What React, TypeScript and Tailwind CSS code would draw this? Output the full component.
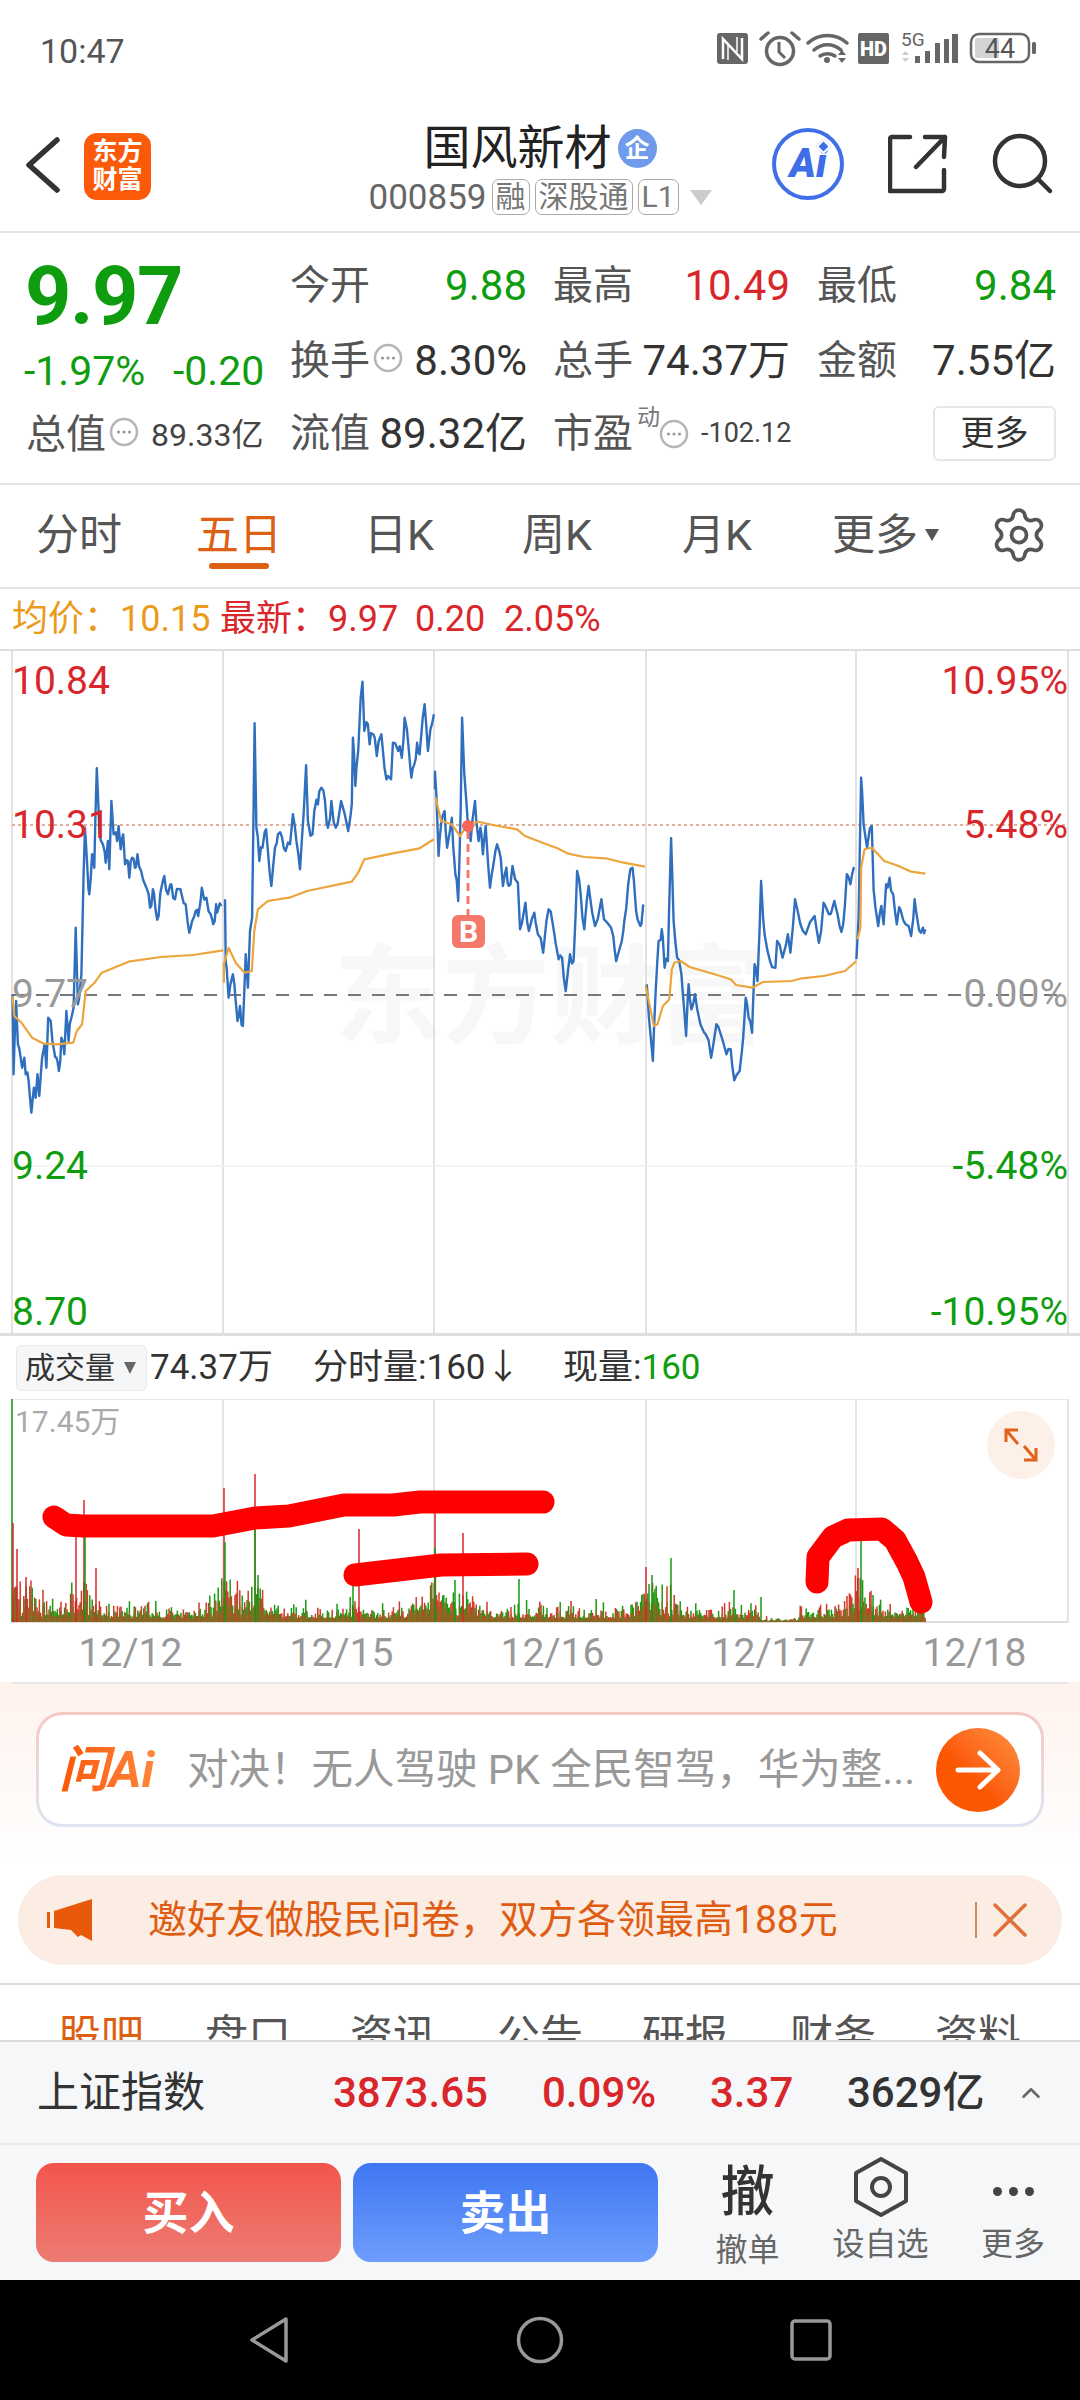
import { Settings, ChevronUp } from "lucide-react";

type Pt = [number, number];

// price series per trading day, stored in chart units (x * 2.8, y * 3 from the chart origin)
const priceA: Pt[][] = [
  [[35,1060],[38,1300],[45,1080],[50,1210],[58,1250],[62,1280],[68,1250],[72,1300],[80,1320],[88,1415],[95,1340],[100,1370],[105,1300],[110,1365],[118,1250],[125,1210],[130,1280],[135,1130],[142,1140],[150,1220],[158,1250],[165,1290],[172,1190],[180,1240],[186,1110],[192,1200],[200,1130],[206,1100],[212,860],[218,1090],[228,1000],[234,700],[238,560],[243,650],[250,760],[258,640],[264,680],[271,382],[278,560],[288,610],[296,665],[302,600],[306,685],[312,480],[318,580],[328,600],[332,555],[338,625],[345,580],[350,670],[358,660],[362,710],[370,650],[378,680],[385,640],[395,690],[410,740],[420,800],[428,745],[436,810],[444,825],[452,740],[460,705],[470,760],[480,730],[490,775],[505,745],[520,790],[530,875],[538,840],[548,810],[555,825],[565,740],[578,770],[590,820],[597,850],[605,790],[612,800],[620,795]],
  [[630,775],[632,960],[640,1070],[652,1000],[660,1080],[665,1140],[672,1095],[680,1155],[688,940],[694,1040],[700,870],[706,830],[713,247],[718,560],[726,660],[735,620],[745,565],[750,630],[760,735],[770,620],[778,580],[790,590],[800,630],[812,610],[820,520],[830,600],[840,685],[850,520],[857,373],[862,540],[875,580],[880,510],[890,490],[900,440],[910,480],[918,560],[928,480],[940,560],[955,480],[975,570],[985,490],[988,290],[995,435],[1003,330],[1010,170],[1015,122],[1020,270],[1030,250],[1035,310],[1045,280],[1055,345],[1068,280],[1082,415],[1095,415],[1100,305],[1115,330],[1125,350],[1133,230],[1145,330],[1152,410],[1160,370],[1168,305],[1175,340],[1189,190],[1198,330],[1205,265],[1215,220]],
  [[1218,445],[1218,392],[1228,645],[1235,550],[1245,510],[1252,620],[1265,530],[1275,700],[1283,780],[1290,500],[1294,230],[1300,400],[1310,550],[1318,600],[1330,480],[1340,600],[1345,560],[1352,640],[1360,555],[1372,740],[1380,680],[1392,610],[1402,650],[1408,735],[1418,680],[1425,735],[1435,675],[1450,725],[1456,865],[1471,785],[1481,870],[1496,815],[1506,880],[1521,935],[1536,805],[1551,870],[1564,955],[1574,950],[1584,1050],[1596,940],[1606,960],[1616,690],[1626,760],[1636,865],[1648,735],[1666,855],[1684,775],[1696,840],[1711,860],[1721,925],[1728,950],[1741,900],[1748,840],[1759,730],[1771,680],[1781,810],[1793,855],[1801,790]],
  [[1811,1030],[1828,1260],[1836,1050],[1844,900],[1853,865],[1861,980],[1870,960],[1879,592],[1886,840],[1896,950],[1908,1000],[1916,1110],[1921,1185],[1928,1030],[1936,1105],[1946,1060],[1961,1150],[1976,1180],[1991,1250],[2006,1150],[2021,1190],[2034,1240],[2046,1225],[2056,1318],[2071,1290],[2081,1190],[2088,1070],[2096,1130],[2106,1175],[2113,970],[2121,1020],[2131,720],[2141,880],[2156,960],[2171,980],[2176,900],[2191,950],[2206,880],[2213,935],[2226,775],[2241,850],[2256,880],[2281,825],[2293,905],[2306,785],[2321,820],[2336,780],[2351,855],[2361,850],[2371,700],[2381,730],[2391,678]],
  [[2398,955],[2404,830],[2411,410],[2418,550],[2428,620],[2441,555],[2446,745],[2459,855],[2468,795],[2474,850],[2481,730],[2491,710],[2501,760],[2511,850],[2521,805],[2536,850],[2551,885],[2561,775],[2568,830],[2578,875],[2584,860],[2591,865]],
];

const averageA: Pt[][] = [
  [[35,1065],[40,1125],[60,1145],[90,1190],[120,1207],[160,1210],[205,1205],[215,1170],[230,1150],[240,1050],[265,1025],[285,995],[360,962],[450,948],[540,942],[625,928]],
  [[627,1025],[627,970],[640,920],[660,965],[685,995],[705,990],[712,870],[722,805],[750,780],[810,770],[860,750],[985,722],[1003,695],[1020,655],[1100,637],[1175,622],[1215,595]],
  [[1220,470],[1235,540],[1265,550],[1288,585],[1310,550],[1340,542],[1380,552],[1448,565],[1470,585],[1530,610],[1561,622],[1591,638],[1636,648],[1696,652],[1746,665],[1806,677]],
  [[1808,1035],[1831,1155],[1841,1150],[1856,1095],[1874,1075],[1881,985],[1888,965],[1906,960],[1931,978],[1996,998],[2046,1015],[2061,1032],[2106,1040],[2136,1023],[2216,1020],[2246,1012],[2306,1005],[2366,990],[2398,960]],
  [[2401,895],[2409,860],[2411,680],[2421,625],[2441,620],[2476,660],[2516,675],[2551,692],[2591,698]],
];

const toPoints = (pts: Pt[]) =>
  pts.map(([x, y]) => `${(x / 2.8).toFixed(1)},${(640 + y / 3).toFixed(1)}`).join(" ");

const makeRandom = (start: number) => {
  let seed = start;
  return () => {
    seed = (seed * 16807) % 2147483647;
    return seed / 2147483647;
  };
};

// minute-level wiggle between the sampled prices
const roughen = (pts: Pt[], start: number): Pt[] => {
  const rnd = makeRandom(start);
  const out: Pt[] = [];
  pts.forEach(([x, y], i) => {
    out.push([x, y]);
    const next = pts[i + 1];
    if (next && next[0] - x >= 7) {
      const t = 0.35 + rnd() * 0.3;
      out.push([x + (next[0] - x) * t, y + (next[1] - y) * t + (rnd() - 0.5) * 46]);
    }
  });
  return out;
};

// turnover bars: a noisy floor plus bursts around the open and close of each session
const bursts: [number, number, number][] = [
  [20, 18, 38], [80, 10, 38], [228, 12, 36], [255, 8, 36], [355, 7, 24], [432, 10, 40],
  [460, 12, 22], [648, 7, 34], [668, 7, 36], [860, 10, 42],
];
const buildBars = () => {
  const rnd = makeRandom(4711);
  const out: { x: number; h: number; red: boolean }[] = [];
  for (let x = 13; x <= 926; x += 1.2) {
    const quiet = x > 760 && x < 800 ? 0.3 : 1;
    let h = (4 + rnd() * rnd() * 20) * quiet;
    for (const [c, s, a] of bursts) {
      h += a * Math.exp(-((x - c) ** 2) / (2 * s * s)) * rnd();
    }
    out.push({ x, h, red: rnd() > 0.5 });
  }
  return out;
};
const bars = buildBars();

const spikes: [number, number, string][] = [
  [12, 1399, "#0f9d0f"], [13, 1523, "#d9262b"], [17, 1549, "#d9262b"], [26, 1577, "#d9262b"],
  [76, 1537, "#d9262b"], [84, 1500, "#d9262b"], [85, 1537, "#0f9d0f"], [96, 1568, "#d9262b"],
  [224, 1488, "#d9262b"], [225, 1542, "#0f9d0f"], [255, 1474, "#d9262b"], [255, 1528, "#0f9d0f"],
  [258, 1575, "#0f9d0f"], [359, 1529, "#d9262b"], [353, 1583, "#0f9d0f"], [435, 1512, "#d9262b"],
  [435, 1548, "#0f9d0f"], [463, 1533, "#d9262b"], [455, 1580, "#0f9d0f"], [519, 1579, "#0f9d0f"],
  [646, 1567, "#d9262b"], [652, 1575, "#0f9d0f"], [671, 1558, "#0f9d0f"], [734, 1590, "#0f9d0f"],
  [761, 1597, "#0f9d0f"], [858, 1568, "#d9262b"], [861, 1538, "#0f9d0f"], [873, 1595, "#0f9d0f"],
];

const gridX = [12, 223, 434, 646, 856, 1068];

function MoreDot({ className = "" }: { className?: string }) {
  return (
    <svg width="30" height="30" viewBox="0 0 30 30" className={`shrink-0 ${className}`}>
      <circle cx="15" cy="15" r="13" fill="none" stroke="#b5b5b5" strokeWidth="2.5" />
      <circle cx="9.5" cy="15" r="1.6" fill="#999" />
      <circle cx="15" cy="15" r="1.6" fill="#999" />
      <circle cx="20.5" cy="15" r="1.6" fill="#999" />
    </svg>
  );
}

function StatusIcons() {
  return (
    <svg width="325" height="44" viewBox="715 30 325 44" className="block">
      {/* nfc */}
      <rect x="717" y="34" width="31" height="31" rx="3" fill="#666" />
      <path d="M723 60V40l19 20V39" fill="none" stroke="#fff" strokeWidth="2.5" />
      <path d="M728 61V46M737 38v15" fill="none" stroke="#fff" strokeWidth="1.5" />
      {/* alarm */}
      <circle cx="780" cy="52" r="13.5" fill="none" stroke="#666" strokeWidth="3.5" />
      <path d="M779 43v10l6 6" fill="none" stroke="#666" strokeWidth="3" />
      <path d="M761 40l7-6M799 40l-7-6" fill="none" stroke="#666" strokeWidth="3.5" strokeLinecap="round" />
      {/* wifi */}
      <path d="M808 44c11-10 28-10 39 0M814 51c8-7 19-7 27 0M820 57c4-3 11-3 15 0" fill="none" stroke="#666" strokeWidth="3.5" strokeLinecap="round" />
      <circle cx="827" cy="61" r="3" fill="#666" />
      <path d="M838 56l4-5 4 5zM838 59l4 5 4-5z" fill="#666" />
      {/* hd */}
      <rect x="858" y="34" width="31" height="31" rx="2" fill="#666" />
      <text x="873.5" y="57" textAnchor="middle" fontSize="20" fontWeight="900" fill="#fff">HD</text>
      {/* mobile data */}
      <text x="901" y="47" fontSize="19" fill="#666">5G</text>
      <path d="M902 56l3.500-4 3.500 4zM902 59l3.500 4 3.500-4z" fill="#ccc" />
      <rect x="915" y="57" width="5" height="7" fill="#666" />
      <rect x="925" y="52" width="5" height="12" fill="#666" />
      <rect x="935" y="44" width="5" height="20" fill="#666" />
      <rect x="952" y="35" width="6" height="29" fill="#666" />
      <rect x="944" y="40" width="5" height="24" fill="#666" />
      {/* battery */}
      <rect x="971" y="35" width="58" height="28" rx="8" fill="none" stroke="#666" strokeWidth="2.5" />
      <path d="M977 39h22v20h-22a2 2 0 0 1-2-2V41a2 2 0 0 1 2-2z" fill="#d4d4d4" />
      <rect x="1032" y="43" width="4" height="12" rx="1.500" fill="#666" />
      <text x="1000" y="59" textAnchor="middle" fontSize="27" fill="#555">44</text>
    </svg>
  );
}

function Tag({ children }: { children: React.ReactNode }) {
  return (
    <span className="flex h-[36px] items-center rounded-[7px] border-[1.5px] border-[#aaa] px-[3px] text-[30px] leading-none text-[#777]">
      {children}
    </span>
  );
}

function Header() {
  return (
    <div className="flex h-[133px] border-b-2 border-[#e4e4e4]">
      <div className="flex w-[320px] items-center pl-[26px]">
        <svg width="34" height="56" viewBox="0 0 34 56" className="mb-[2px]">
          <path d="M31 3 3 28l28 25" fill="none" stroke="#333" strokeWidth="5.500" strokeLinecap="round" strokeLinejoin="round" />
        </svg>
        <div className="mt-[1px] ml-[24px] flex h-[67px] w-[67px] flex-col items-center justify-center rounded-[13px] bg-[#fa5a0a] text-[25px] leading-[28px] font-bold text-white">
          <span>东方</span>
          <span>财富</span>
        </div>
      </div>
      <div className="flex w-[440px] flex-col items-center pt-[22px]">
        <div className="flex items-center">
          <span className="text-[47px] leading-[52px] text-[#222]">国风新材</span>
          <span className="ml-[6px] flex h-[39px] w-[39px] items-center justify-center rounded-full bg-[#6f9bea] text-[25px] leading-none font-bold text-white">
            企
          </span>
        </div>
        <div className="mt-[5px] flex items-center gap-[5px]">
          <span className="text-[35px] leading-none text-[#666]">000859</span>
          <Tag>融</Tag>
          <Tag>深股通</Tag>
          <Tag>L1</Tag>
          <svg width="22" height="15" viewBox="0 0 22 15" className="ml-[6px]">
            <path d="M0 0h22L11 15z" fill="#ccc" />
          </svg>
        </div>
      </div>
      <div className="flex flex-1 items-center pb-[4px] pl-[12px]">
        <div className="relative flex h-[72px] w-[72px] items-center justify-center rounded-full border-[4px] border-[#3f6fe8]">
          <span className="text-[40px] leading-none font-black text-[#3f6fe8] italic">Ai</span>
          <span className="absolute top-[9px] right-[11px] h-[11px] w-[11px] rotate-45 border-2 border-white bg-[#3f6fe8]" />
        </div>
        <svg width="60" height="60" viewBox="0 0 60 60" className="ml-[44px]">
          <path d="M22 3H4a2 2 0 0 0-2 2v52h52a2 2 0 0 0 2-2V36M28 33 57 3M37 3h20l-1 20" fill="none" stroke="#333" strokeWidth="4.500" strokeLinecap="round" strokeLinejoin="round" />
        </svg>
        <svg width="62" height="62" viewBox="0 0 62 62" className="ml-[44px]">
          <circle cx="28" cy="28" r="25" fill="none" stroke="#333" strokeWidth="4.500" />
          <path d="M46 46 58 58" fill="none" stroke="#333" strokeWidth="4.500" strokeLinecap="round" />
        </svg>
      </div>
    </div>
  );
}

function Quote() {
  const label = "shrink-0 whitespace-nowrap text-[40px] leading-none text-[#555]";
  const num = "text-[42px] leading-none";
  return (
    <div className="flex h-[252px] border-b-2 border-[#e4e4e4]">
      <div className="w-[290px] shrink-0">
        <div className="h-[84px] pt-[24px] pl-[25px] text-[81px] leading-[80px] font-bold tracking-[-1.5px] text-[#0f9d0f]">
          9.97
        </div>
        <div className="mt-[34px] flex h-[40px] items-center pl-[24px] text-[#0f9d0f]">
          <span className="w-[149px] text-[41px] leading-none">-1.97%</span>
          <span className="text-[41px] leading-none">-0.20</span>
        </div>
        <div className="mt-[24px] flex h-[40px] items-center pl-[26px]">
          <span className={label}>总值</span>
          <MoreDot className="mt-[-6px] ml-[3px]" />
          <span className="ml-[12px] text-[32px] leading-none text-[#444]">89.33亿</span>
        </div>
      </div>
      <div className="flex-1 pt-[15px]">
        <div className="flex h-[76px] items-center">
          <div className="flex w-[237px] items-center justify-between">
            <span className={label}>今开</span>
            <span className={`${num} text-[#0f9d0f]`}>9.88</span>
          </div>
          <div className="ml-[26px] flex w-[237px] items-center justify-between">
            <span className={label}>最高</span>
            <span className={`${num} text-[#d9262b]`}>10.49</span>
          </div>
          <div className="ml-[27px] flex w-[239px] items-center justify-between">
            <span className={label}>最低</span>
            <span className={`${num} text-[#0f9d0f]`}>9.84</span>
          </div>
        </div>
        <div className="flex h-[73px] items-center">
          <div className="flex w-[237px] items-center justify-between">
            <span className="flex items-center">
              <span className={label}>换手</span>
              <MoreDot className="mt-[-6px] ml-[3px]" />
            </span>
            <span className={`${num} text-[#333]`}>8.30%</span>
          </div>
          <div className="ml-[26px] flex w-[237px] items-center justify-between">
            <span className={label}>总手</span>
            <span className={`${num} text-[#333]`}>74.37万</span>
          </div>
          <div className="ml-[27px] flex w-[239px] items-center justify-between">
            <span className={label}>金额</span>
            <span className={`${num} text-[#333]`}>7.55亿</span>
          </div>
        </div>
        <div className="flex h-[73px] items-center">
          <div className="flex w-[237px] items-center justify-between">
            <span className={label}>流值</span>
            <span className={`${num} text-[#333]`}>89.32亿</span>
          </div>
          <div className="relative ml-[26px] flex w-[237px] items-center">
            <span className={label}>市盈</span>
            <span className="absolute top-[-8px] left-[84px] text-[23px] leading-none text-[#777]">动</span>
            <MoreDot className="ml-[26px]" />
            <span className="ml-[12px] text-[27px] leading-none whitespace-nowrap text-[#444]">-102.12</span>
          </div>
          <div className="ml-[27px] flex w-[239px] justify-end">
            <div className="h-[55px] w-[123px] rounded-[6px] border-2 border-[#e6e6e6] text-center text-[34px] leading-[51px] text-[#333]">
              更多
            </div>
          </div>
        </div>
      </div>
    </div>
  );
}

function PeriodTabs() {
  const tab = "text-[43px] leading-none text-[#555]";
  return (
    <div className="flex h-[104px] items-center border-b-2 border-[#e4e4e4] pb-[2px] pl-[36px]">
      <div className="w-[160px]">
        <span className={tab}>分时</span>
      </div>
      <div className="relative w-[168px]">
        <span className="text-[43px] leading-none text-[#dd5f14]">五日</span>
        <span className="absolute top-[49px] left-[13px] h-[6px] w-[60px] rounded-[3px] bg-[#dd5f14]" />
      </div>
      <div className="w-[158px]">
        <span className={tab}>日K</span>
      </div>
      <div className="w-[160px]">
        <span className={tab}>周K</span>
      </div>
      <div className="w-[150px]">
        <span className={tab}>月K</span>
      </div>
      <div className="flex w-[157px] items-center">
        <span className={tab}>更多</span>
        <svg width="16" height="14" viewBox="0 0 16 14" className="ml-[6px]">
          <path d="M1 1h14L8 13z" fill="#555" />
        </svg>
      </div>
      <Settings size={60} strokeWidth={1.5} color="#555" />
    </div>
  );
}

function InfoRow() {
  return (
    <div className="flex h-[60px] items-center pl-[12px] text-[36px] leading-none text-[#d9262b]">
      <span className="text-[#eb9a1c]">均价：</span>
      <span className="w-[100px] text-[#eb9a1c]">10.15</span>
      <span>最新：</span>
      <span className="w-[87px]">9.97</span>
      <span className="w-[89px]">0.20</span>
      <span>2.05%</span>
    </div>
  );
}

function axisLabel(y: string, align: string, color: string, text: string) {
  return (
    <span className={`absolute ${y} ${align} text-[39px] leading-none ${color}`}>{text}</span>
  );
}

function PriceChart() {
  return (
    <div className="relative h-[687px] overflow-hidden border-t-2 border-b-[3px] border-[#dedede]">
      <div className="absolute top-[293px] left-[334px] text-[108px] leading-none font-bold text-[#f7f7f7]">
        东方财富
      </div>
      <svg width="1080" height="687" viewBox="0 650 1080 687" className="absolute top-0 left-0">
        {gridX.map((x) => (
          <line key={x} x1={x} x2={x} y1={650} y2={1337} stroke="#d8d8d8" strokeWidth="1.500" />
        ))}
        <line x1={12} x2={1068} y1={1165} y2={1165} stroke="#f0f0f0" strokeWidth="1.500" />
        <line x1={12} x2={1068} y1={824} y2={824} stroke="#d9967a" strokeWidth="1.500" strokeDasharray="3 3" />
        <line x1={12} x2={1068} y1={994} y2={994} stroke="#777" strokeWidth="2" strokeDasharray="13 11" />
        {priceA.map((pts, i) => (
          <polyline key={i} points={toPoints(roughen(pts, 101 + i * 37))} fill="none" stroke="#2f6fbe" strokeWidth="2.400" strokeLinejoin="round" />
        ))}
        {averageA.map((pts, i) => (
          <polyline key={i} points={toPoints(pts)} fill="none" stroke="#eca43c" strokeWidth="2.200" strokeLinejoin="round" />
        ))}
        {/* buy marker */}
        <line x1={468} x2={468} y1={830} y2={915} stroke="#f4796b" strokeWidth="3" strokeDasharray="8 5" />
        <circle cx="468" cy="825" r="6" fill="#f4655a" />
      </svg>
      <div className="absolute top-[264px] left-[452px] flex h-[33px] w-[33px] items-center justify-center rounded-[6px] bg-[#f4796b] text-[30px] leading-none font-bold text-white">
        B
      </div>
      {axisLabel("top-[11px]", "left-[12px]", "text-[#d9262b]", "10.84")}
      {axisLabel("top-[155px]", "left-[12px]", "text-[#d9262b]", "10.31")}
      {axisLabel("top-[324px]", "left-[12px]", "text-[#999]", "9.77")}
      {axisLabel("top-[496px]", "left-[12px]", "text-[#0f9d0f]", "9.24")}
      {axisLabel("top-[642px]", "left-[12px]", "text-[#0f9d0f]", "8.70")}
      {axisLabel("top-[11px]", "right-[12px]", "text-[#d9262b]", "10.95%")}
      {axisLabel("top-[155px]", "right-[12px]", "text-[#d9262b]", "5.48%")}
      {axisLabel("top-[324px]", "right-[12px]", "text-[#999]", "0.00%")}
      {axisLabel("top-[496px]", "right-[12px]", "text-[#0f9d0f]", "-5.48%")}
      {axisLabel("top-[642px]", "right-[12px]", "text-[#0f9d0f]", "-10.95%")}
    </div>
  );
}

function VolumeHeader() {
  return (
    <div className="flex h-[63px] items-center text-[35px] leading-none text-[#333]">
      <div className="ml-[16px] flex h-[46px] w-[131px] items-center rounded-[6px] border border-[#e8e8ea] bg-[#f5f6f8] pl-[8px]">
        <span className="text-[30px]">成交量</span>
        <svg width="12" height="13" viewBox="0 0 12 13" className="ml-[9px]">
          <path d="M0 1h12L6 13z" fill="#666" />
        </svg>
      </div>
      <span className="ml-[3px] w-[163px]">74.37万</span>
      <span className="w-[250px]">分时量:160↓</span>
      <span>现量:</span>
      <span className="text-[#0f9d0f]">160</span>
    </div>
  );
}

function VolumeChart() {
  return (
    <div className="relative h-[225px]">
      <svg width="1080" height="225" viewBox="0 1399 1080 225" className="block">
        <line x1={12} x2={1068} y1={1399} y2={1399} stroke="#e0e0e0" strokeWidth="1.500" />
        <line x1={12} x2={1068} y1={1622} y2={1622} stroke="#dedede" strokeWidth="2" />
        {gridX.map((x) => (
          <line key={x} x1={x} x2={x} y1={1399} y2={1622} stroke="#dcdcdc" strokeWidth="1.500" />
        ))}
        {bars.map((b) => (
          <line key={b.x} x1={b.x} x2={b.x} y1={1622} y2={1622 - b.h} stroke={b.red ? "#cf3a2a" : "#1a9a12"} strokeWidth="1.500" />
        ))}
        {/* overlapping red and green bars read as olive near the floor */}
        {bars.map((b) => (
          <line key={b.x} x1={b.x} x2={b.x} y1={1622} y2={1622 - b.h * 0.55} stroke="#8f6420" strokeWidth="1.200" />
        ))}
        {spikes.map(([x, top, color]) => (
          <line key={`${x}-${top}`} x1={x} x2={x} y1={1622} y2={top} stroke={color} strokeWidth="1.500" />
        ))}
        {/* hand-drawn marks over the bars */}
        <g fill="none" stroke="#ff0000" strokeWidth="23" strokeLinecap="round" strokeLinejoin="round">
          <polyline points="54,1517 66,1525 83,1526 213,1526 255,1518 289,1516 344,1505 393,1505 420,1502 543,1502" />
          <polyline points="355,1575 441,1565 527,1564" />
          <polyline points="817,1582 818,1557 833,1537 848,1530 882,1529 895,1540 907,1562 914,1577 921,1602" />
        </g>
      </svg>
      <span className="absolute top-[8px] left-[15px] text-[30px] leading-none text-[#aaa]">17.45万</span>
      <div className="absolute top-[12px] left-[987px] flex h-[68px] w-[68px] items-center justify-center rounded-full bg-[#fdf0e8]">
        <svg width="40" height="40" viewBox="0 0 40 40">
          <path d="M5 17V5h12M5 5l12 14M35 23v12H23M35 35 23 21" fill="none" stroke="#e0631a" strokeWidth="3" />
        </svg>
      </div>
    </div>
  );
}

function DateAxis() {
  return (
    <div className="flex h-[58px] items-center pl-[25px] text-[39px] leading-none text-[#999]">
      {["12/12", "12/15", "12/16", "12/17", "12/18"].map((d) => (
        <span key={d} className="w-[211px] text-center">
          {d}
        </span>
      ))}
    </div>
  );
}

function Promo() {
  return (
    <div className="h-[301px] bg-linear-to-b from-[#fef2ed] to-[#ffffff] to-[60%]">
      <div className="mx-[12px] h-[2px] bg-[#e6e6e6]" />
      <div className="mx-[36px] mt-[28px] h-[115px] rounded-[26px] bg-linear-to-b from-[#f6c8c2] to-[#dde4f2] p-[3px]">
        <div className="flex h-full items-center rounded-[23px] bg-white pl-[20px]">
          <span className="w-[106px] bg-linear-to-r from-[#fb5600] to-[#fe8a3c] bg-clip-text text-[50px] leading-[54px] font-bold whitespace-nowrap text-transparent italic">
            问Ai
          </span>
          <span className="ml-[22px] w-[736px] text-[41.5px] leading-none whitespace-nowrap text-[#999]">
            对决！无人驾驶 PK 全民智驾，华为整...
          </span>
          <div className="ml-[13px] flex h-[84px] w-[84px] shrink-0 items-center justify-center rounded-full bg-linear-to-tr from-[#fb5600] from-40% to-[#fd8f3e]">
            <svg width="48" height="40" viewBox="0 0 48 40">
              <path d="M4 20h40M26 3l18 17-18 17" fill="none" stroke="#fff" strokeWidth="5" strokeLinecap="round" strokeLinejoin="round" />
            </svg>
          </div>
        </div>
      </div>
      <div className="mx-[18px] mt-[48px] flex h-[90px] items-center rounded-full bg-[#fbece4]">
        <svg width="46" height="42" viewBox="0 0 46 42" className="ml-[29px]">
          <path d="M0 13h3v16H0zM7 12 45 0v42l-11-6-3 2-7-7-17-2z" fill="#e8590c" />
        </svg>
        <span className="ml-[55px] w-[827px] text-[39px] leading-none whitespace-nowrap text-[#de5d12]">
          邀好友做股民问卷，双方各领最高188元
        </span>
        <span className="h-[36px] w-[2px] bg-[#d08a5c]" />
        <svg width="34" height="34" viewBox="0 0 34 34" className="ml-[16px]">
          <path d="M2 2l30 30M32 2 2 32" fill="none" stroke="#e0703a" strokeWidth="3.500" strokeLinecap="round" />
        </svg>
      </div>
    </div>
  );
}

function SectionTabs() {
  const items = [
    { label: "盘口", w: "w-[145px]" },
    { label: "资讯", w: "w-[147px]" },
    { label: "公告", w: "w-[145px]" },
    { label: "研报", w: "w-[148px]" },
    { label: "财务", w: "w-[145px]" },
    { label: "资料", w: "w-[86px]" },
  ];
  return (
    <div className="flex h-[57px] overflow-hidden border-t-2 border-[#dedede] pt-[30px] pl-[58px] text-[43px] leading-none text-[#555]">
      <span className="w-[147px] text-[#dd5f14]">股吧</span>
      {items.map((t) => (
        <span key={t.label} className={t.w}>
          {t.label}
        </span>
      ))}
    </div>
  );
}

function IndexBar() {
  return (
    <div className="flex h-[105px] items-center border-t-2 border-b-2 border-t-[#dcdcdc] border-b-[#e8e8e8] bg-[#f6f7f9] pl-[37px] text-[42px] leading-none">
      <span className="w-[296px] text-[#333]">上证指数</span>
      <span className="w-[209px] font-medium text-[#d9262b]">3873.65</span>
      <span className="w-[168px] font-medium text-[#d9262b]">0.09%</span>
      <span className="w-[137px] font-medium text-[#d9262b]">3.37</span>
      <span className="w-[169px] font-medium text-[#333]">3629亿</span>
      <ChevronUp size={30} strokeWidth={2} color="#666" />
    </div>
  );
}

function ActionBar() {
  const caption = "text-[32px] leading-none text-[#666]";
  return (
    <div className="flex h-[135px] bg-[#f6f7f9] pt-[18px] pl-[36px]">
      <div className="flex h-[99px] w-[305px] items-center justify-center rounded-[18px] bg-linear-to-b from-[#f2544c] to-[#ec7b72] text-[46px] leading-none font-bold text-white">
        买入
      </div>
      <div className="ml-[12px] flex h-[99px] w-[305px] items-center justify-center rounded-[18px] bg-linear-to-b from-[#3f76f2] to-[#6e9dfc] text-[46px] leading-none font-bold text-white">
        卖出
      </div>
      <div className="ml-[23px] flex w-[133px] flex-col items-center">
        <span className="mt-[-3px] flex h-[66px] items-center text-[54px] leading-none font-medium text-[#333]">撤</span>
        <span className={`${caption} mt-[8px]`}>撤单</span>
      </div>
      <div className="flex w-[133px] flex-col items-center">
        <svg width="54" height="60" viewBox="0 0 54 60" className="mt-[-6px] mb-[3px]">
          <path d="M27 2 52 16v28L27 58 2 44V16z" fill="none" stroke="#444" strokeWidth="4" strokeLinejoin="round" />
          <circle cx="27" cy="30" r="9" fill="none" stroke="#444" strokeWidth="4" />
        </svg>
        <span className={`${caption} mt-[8px]`}>设自选</span>
      </div>
      <div className="flex w-[132px] flex-col items-center">
        <div className="flex h-[57px] items-center gap-[7px]">
          <span className="h-[9px] w-[9px] rounded-full bg-[#444]" />
          <span className="h-[9px] w-[9px] rounded-full bg-[#444]" />
          <span className="h-[9px] w-[9px] rounded-full bg-[#444]" />
        </div>
        <span className={`${caption} mt-[8px]`}>更多</span>
      </div>
    </div>
  );
}

function NavBar() {
  return (
    <div className="flex h-[120px] items-center bg-black pl-[248px]">
      <svg width="42" height="48" viewBox="0 0 42 48">
        <path d="M38 3 4 24l34 21z" fill="none" stroke="#999" strokeWidth="3.500" strokeLinejoin="round" />
      </svg>
      <svg width="48" height="48" viewBox="0 0 48 48" className="ml-[226px]">
        <circle cx="24" cy="24" r="21.500" fill="none" stroke="#999" strokeWidth="3.500" />
      </svg>
      <svg width="42" height="44" viewBox="0 0 42 44" className="ml-[226px]">
        <rect x="2" y="3" width="38" height="38" rx="3" fill="none" stroke="#999" strokeWidth="3.500" />
      </svg>
    </div>
  );
}

export default function App() {
  return (
    <div className="flex h-[2400px] w-[1080px] flex-col overflow-hidden bg-white font-[Roboto,'Noto_Sans_CJK_SC',sans-serif]">
      <div className="flex h-[100px] items-center justify-between pt-[2px] pr-[40px] pl-[40px]">
        <span className="text-[34px] leading-none text-[#555]">10:47</span>
        <StatusIcons />
      </div>
      <Header />
      <Quote />
      <PeriodTabs />
      <InfoRow />
      <PriceChart />
      <VolumeHeader />
      <VolumeChart />
      <DateAxis />
      <Promo />
      <SectionTabs />
      <IndexBar />
      <ActionBar />
      <NavBar />
    </div>
  );
}
